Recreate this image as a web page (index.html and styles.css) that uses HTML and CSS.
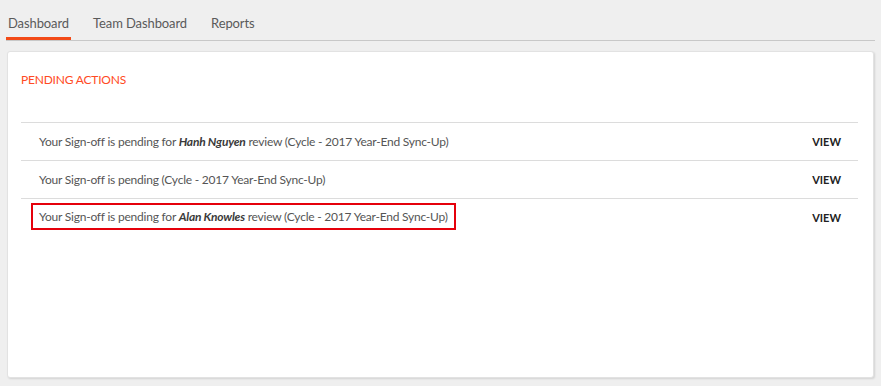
FILE: index.html
```html
<!DOCTYPE html>
<html lang="en">
<head>
<meta charset="utf-8">
<title>Dashboard</title>
<link rel="stylesheet" href="styles.css">
</head>
<body>

<ul class="tabs">
	<li class="tab active">Dashboard</li>
	<li class="tab">Team Dashboard</li>
	<li class="tab">Reports</li>
</ul>

<div class="card">
	<h2 class="card-title">PENDING ACTIONS</h2>
	<ul class="actions">
		<li class="action">
			<span class="action-text">Your Sign-off is pending for <b><i>Hanh Nguyen</i></b> review (Cycle - 2017 Year-End Sync-Up)</span>
			<a class="view" href="#">VIEW</a>
		</li>
		<li class="action">
			<span class="action-text">Your Sign-off is pending (Cycle - 2017 Year-End Sync-Up)</span>
			<a class="view" href="#">VIEW</a>
		</li>
		<li class="action">
			<span class="action-text marked">Your Sign-off is pending for <b><i>Alan Knowles</i></b> review (Cycle - 2017 Year-End Sync-Up)</span>
			<a class="view" href="#">VIEW</a>
		</li>
	</ul>
</div>

</body>
</html>
```

FILE: styles.css
```css
body {
	margin: 0;
	background: #efefef;
	font-family: Lato, "Open Sans", sans-serif;
	color: #555;
}
.tabs {
	display: flex;
	margin: 0 6px;
	padding: 0;
	list-style: none;
	border-bottom: 1px solid #c8c8c8;
}
.tab {
	padding: 13px 2px 4px 2px;
	margin-right: 20px;
	line-height: 20px;
	font-size: 13px;
	letter-spacing: -0.1px;
	color: #5a5a5a;
	border-bottom: 3px solid transparent;
}
.tab.active {
	border-bottom-color: #f24a17;
}
.card {
	height: 327px;
	box-sizing: border-box;
	margin: 10px 7px 8px 7px;
	padding: 19px 15px 0 13px;
	background: #fff;
	border: 1px solid #e2e2e2;
	border-radius: 3px;
	box-shadow: 1px 1px 2px rgba(0, 0, 0, 0.12);
}
.card-title {
	margin: 0 0 33px 0;
	font-size: 12px;
	line-height: 18px;
	letter-spacing: -0.2px;
	font-weight: normal;
	color: #ff4a24;
}
.actions {
	margin: 0;
	padding: 0;
	list-style: none;
	border-top: 1px solid #dcdcdc;
}
.action {
	display: flex;
	align-items: center;
	justify-content: space-between;
	height: 37px;
	padding: 0 17px 0 18px;
	font-size: 12px;
	letter-spacing: -0.22px;
	border-bottom: 1px solid #dcdcdc;
}
.action:last-child {
	border-bottom: none;
}
.action-text b {
	color: #3a3a3a;
}
.marked {
	margin-left: -8px;
	margin-top: -2px;
	padding: 5px 6px;
	line-height: 13px;
	border: 2px solid #e5000b;
}
.view {
	font-size: 11px;
	font-weight: bold;
	letter-spacing: 0;
	color: #222;
	text-decoration: none;
}
```
